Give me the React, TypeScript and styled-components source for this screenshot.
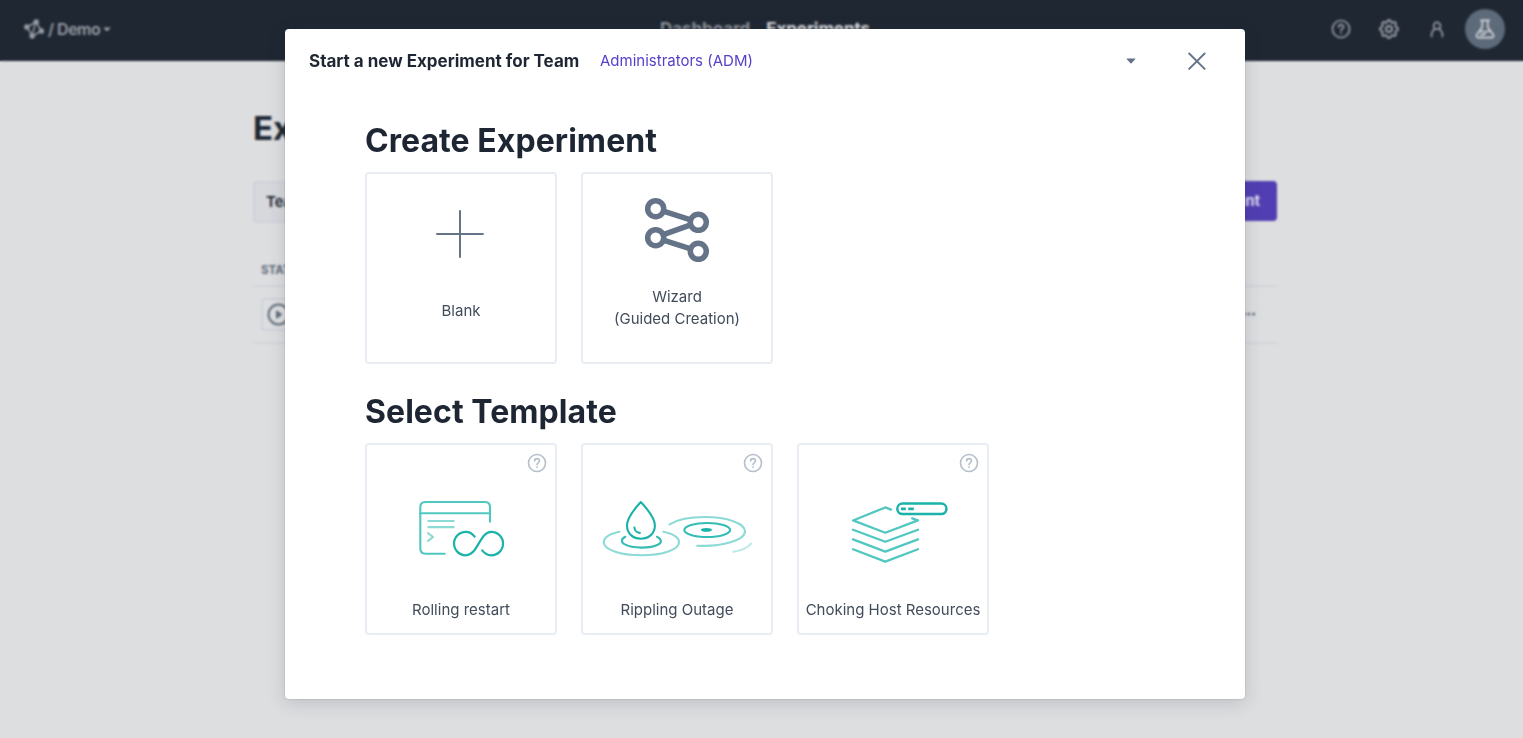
import React from "react";
import styled, { createGlobalStyle } from "styled-components";
import { HiOutlineCog } from "react-icons/hi";

const GlobalStyle = createGlobalStyle`
  * { box-sizing: border-box; }
  html, body { margin: 0; padding: 0; height: 100%; overflow: hidden; }
  body { background: #dddee0; font-family: Inter, "Liberation Sans", sans-serif; color: #1d2632; }
  button { font: inherit; border: 0; background: none; padding: 0; color: inherit; }
  svg { display: block; flex: none; }
`;

const Page = styled.div`
  height: 738px;
  overflow: hidden;
`;

const TopBar = styled.header`
  display: grid;
  grid-template-columns: 1fr auto 1fr;
  align-items: center;
  height: 61px;
  padding: 0 18px 3px 23px;
  background: #1f2733;
`;

const Brand = styled.div`
  display: flex;
  align-items: center;
  color: #999da4;
  font-size: 16px;
  font-weight: 600;
`;

const BrandName = styled.span`
  margin: 0 3px 0 4px;
  letter-spacing: -0.5px;
`;

const Nav = styled.nav`
  display: flex;
  gap: 16px;
  padding-left: 2px;
`;

const NavItem = styled.a<{ $active?: boolean }>`
  font-size: 17px;
  font-weight: 700;
  line-height: 20px;
  letter-spacing: -0.07px;
  color: ${(p) => (p.$active ? "#dddee0" : "#8e939b")};
`;

const Tools = styled.div`
  display: flex;
  justify-content: flex-end;
  align-items: center;
  color: #999da4;
`;

const Tool = styled.span`
  display: flex;
  justify-content: center;
  width: 48px;
`;

const Avatar = styled.span`
  display: flex;
  align-items: center;
  justify-content: center;
  width: 40px;
  height: 40px;
  margin-left: 4px;
  border-radius: 50%;
  background: #5d6a7a;
  color: #d5d8dc;
`;

const Main = styled.main`
  width: 1024px;
  margin-left: 253px;
  padding-top: 46px;
`;

const PageTitle = styled.h1`
  margin: 0;
  font-size: 33px;
  line-height: 42px;
  font-weight: 700;
`;

const ActionRow = styled.div`
  display: flex;
  justify-content: space-between;
  margin-top: 32px;
`;

const FilterButton = styled.button`
  height: 42px;
  width: 150px;
  padding: 0 11px 2px;
  border: 2px solid #ced2da;
  border-radius: 4px;
  background: #d6d8dc;
  font-size: 15px;
  font-weight: 600;
  text-align: left;
`;

const PrimaryButton = styled.button`
  height: 40px;
  padding: 0 17px 1px;
  border-radius: 4px;
  background: #513eb3;
  color: #dcd9ee;
  font-size: 15px;
  font-weight: 700;
`;

const TableHead = styled.div`
  height: 64px;
  padding: 38px 8px 0;
  border-bottom: 2px solid #d2d4da;
  color: #616d7c;
  font-size: 11.5px;
  font-weight: 700;
  line-height: 18px;
`;

const TableRow = styled.div`
  display: flex;
  align-items: center;
  justify-content: space-between;
  height: 57px;
  padding: 0 21px 1px 8px;
  border-bottom: 2px solid #d2d4da;
  color: #616d7c;
`;

const PlayBox = styled.span`
  display: flex;
  align-items: center;
  width: 60px;
  height: 33px;
  padding-left: 4px;
  border: 2px solid #ced2da;
  border-radius: 4px;
`;

const Overlay = styled.div`
  position: fixed;
  inset: 0;
  padding: 29px 0 0 285px;
  backdrop-filter: blur(1px);
`;

const Modal = styled.section`
  width: 960px;
  height: 670px;
  border-radius: 4px;
  background: #fff;
  box-shadow: 0 4px 18px rgba(29, 38, 50, 0.16), 0 0 2px rgba(29, 38, 50, 0.25);
`;

const ModalHeader = styled.header`
  display: flex;
  align-items: center;
  height: 64px;
  padding: 0 39px 0 24px;
`;

const ModalTitle = styled.h2`
  width: 291px;
  margin: 0;
  font-size: 17px;
  font-weight: 700;
  white-space: nowrap;
`;

const TeamSelect = styled.button`
  display: flex;
  align-items: center;
  justify-content: space-between;
  width: 536px;
  margin-right: auto;
  color: #5641c9;
  font-size: 15px;
  line-height: 22px;
`;

const ModalBody = styled.div`
  padding: 27px 80px 0;
`;

const Group = styled.section`
  margin-bottom: 27px;
`;

const GroupTitle = styled.h3`
  margin: 0 0 10px;
  font-size: 32px;
  letter-spacing: 0.06px;
  line-height: 42px;
  font-weight: 700;
`;

const Cards = styled.div`
  display: flex;
  gap: 24px;
`;

const Card = styled.button`
  position: relative;
  display: flex;
  flex-direction: column;
  align-items: center;
  width: 192px;
  height: 192px;
  border: 2px solid #e8edf3;
  border-radius: 4px;
  background: #fff;
`;

const CardArt = styled.span<{ $height: number; $drop?: number }>`
  display: flex;
  align-items: flex-start;
  justify-content: center;
  height: ${(p) => p.$height}px;
  padding-top: ${(p) => p.$drop}px;
`;

const CardLabel = styled.span`
  color: #414c5b;
  font-size: 15px;
  line-height: 22px;
  white-space: nowrap;
`;

const CardHelp = styled.span`
  position: absolute;
  top: 8px;
  right: 8px;
  color: #b5bfcc;
`;

const HelpIcon = ({ size = 20, weight = 1.6 }: { size?: number; weight?: number }) => (
  <svg width={size} height={size} viewBox="0 0 20 20" fill="none" stroke="currentColor" strokeWidth={weight} strokeLinecap="round">
    <circle cx="10" cy="10" r="8.5" />
    <path d="M7.6 8.1C7.6 4.7 12.5 4.9 12.5 7.8C12.5 9.8 10 9.8 10 11.7" />
    <circle cx="10" cy="14.2" r="0.5" fill="currentColor" strokeWidth="0.8" />
  </svg>
);

const Caret = ({ width = 10 }: { width?: number }) => (
  <svg width={width} height={width * 0.6} viewBox="0 0 10 6" fill="currentColor">
    <path d="M1.2.5h7.6c.5 0 .7.5.4.8L5.5 5.2c-.3.3-.7.3-1 0L.8 1.3C.5 1 .7.5 1.2.5Z" />
  </svg>
);

const Logo = () => (
  <svg width="21" height="20" viewBox="23 19 21 20" fill="currentColor" stroke="currentColor" strokeWidth="1.5">
    <path d="M27 27L36 22L41.5 31L32.5 36ZM35 24.5L32.8 33.5" fill="none" />
    <circle cx="26.8" cy="26.9" r="2" />
    <circle cx="36.2" cy="22" r="2" />
    <circle cx="41.4" cy="31" r="2" />
    <circle cx="32.2" cy="36" r="2" />
  </svg>
);

const PersonIcon = () => (
  <svg width="16" height="18" viewBox="0 0 16 18" fill="none" stroke="currentColor" strokeWidth="1.7" strokeLinecap="round">
    <circle cx="8" cy="5.7" r="3.4" />
    <path d="M2.5 16.5C2.5 12.5 4 9.8 6.1 8.7M13.5 16.5C13.5 12.5 12 9.8 9.9 8.7" />
  </svg>
);

const FlaskIcon = () => (
  <svg width="20" height="20" viewBox="0 0 20 20" fill="none" stroke="currentColor" strokeWidth="1.6" strokeLinecap="round" strokeLinejoin="round">
    <path d="M5.8 1.4H14.2M7.3 1.4V8L1.9 15.5C.9 17.2 1.5 18.6 3.2 18.6H16.8C18.5 18.6 19.1 17.2 18.1 15.5L12.7 8V1.4M4.8 12.3H9M11.3 12.3H15M5.6 15.6H8.5L10.5 13.7" />
  </svg>
);

const PlayIcon = () => (
  <svg width="23" height="23" viewBox="0 0 23 23" fill="none" stroke="currentColor" strokeWidth="2">
    <circle cx="11.5" cy="11.5" r="10" />
    <path d="M9.5 7.8L14.8 11.5L9.5 15.2Z" fill="currentColor" strokeWidth="1" />
  </svg>
);

const MoreIcon = () => (
  <svg width="14" height="4" viewBox="0 0 14 4" fill="currentColor">
    <circle cx="2" cy="2" r="1.5" />
    <circle cx="6.8" cy="2" r="1.5" />
    <circle cx="11.6" cy="2" r="1.5" />
  </svg>
);

const CloseIcon = () => (
  <svg width="18" height="18" viewBox="0 0 18 18" stroke="#647387" strokeWidth="1.9" strokeLinecap="round">
    <path d="M1.2 1.5L16.6 16.9M16.6 1.5L1.2 16.9" />
  </svg>
);

const PlusArt = () => (
  <svg width="50" height="50" viewBox="0 0 50 50" stroke="#647387" strokeWidth="2" strokeLinecap="round">
    <path d="M1 25H46.9M24 2V48" />
  </svg>
);

const WizardArt = () => (
  <svg width="66" height="66" viewBox="644 197 66 66" fill="none" stroke="#647387" strokeWidth="5.5">
    <path d="M663.3 211.1L690.7 219.8M690.7 224.8L663.3 234.7M663.3 240.1L690.7 248.8" />
    <circle cx="655.7" cy="208.7" r="8" />
    <circle cx="698.3" cy="222.3" r="8" />
    <circle cx="655.7" cy="237.7" r="8" />
    <circle cx="698.3" cy="251.3" r="8" />
  </svg>
);

const RestartArt = () => (
  <svg width="152" height="68" viewBox="385 498 152 68" fill="none" strokeWidth="2.1" strokeLinecap="round" strokeLinejoin="round">
    <g stroke="#50c7c0">
      <path d="M444.7 553.7H425.5Q420.3 553.7 420.3 548.5V507Q420.3 502 425.3 502H485Q490 502 490 507V521.8" />
      <path d="M420.3 513.2H490" />
    </g>
    <path d="M428.3 521H453.7M428.3 527.1H453.7M428 533.2L433 537L428 540.8" stroke="#8cdad5" />
    <path
      d="M474.6 536.7C472.2 533.4 469.2 531.8 465.8 531.8A11.75 11.75 0 0 0 465.8 555.3C478 555.3 479.5 531.8 491.3 531.8A11.75 11.75 0 0 1 491.3 555.3C487.5 555.3 484.5 553.4 482.2 550.4"
      stroke="#1ab2a9"
      strokeWidth="2.2"
    />
  </svg>
);

const RippleArt = () => (
  <svg width="152" height="68" viewBox="601 498 152 68" fill="none" strokeWidth="2.1" strokeLinecap="round" strokeLinejoin="round">
    <g stroke="#8cdad5">
      <path d="M619.5 531.8C610 533.9 603.8 537.8 603.8 542.3C603.8 549.5 620 555.3 641.5 555.3C663 555.3 679 549.5 679 542.3C679 537.8 673 533.9 663.3 531.8" />
      <path d="M669.5 524.3C677 519.8 690 517 705 517C727 517 745 523.3 745 531.2C745 540 722.5 547 697.2 545.7" />
      <path d="M733.2 551.7C741.5 550.5 748.2 547.6 751 543.7" stroke="#beeae7" />
    </g>
    <g stroke="#35bdb5">
      <path d="M625.3 536.8C620.9 539 621 542.3 624.3 544.2C632.8 548.8 650.2 548.8 658.8 544.2C662 542.3 661.6 539 657 536.8" />
      <ellipse cx="707.2" cy="530" rx="22.9" ry="7" />
    </g>
    <path
      d="M640.8 502C645.5 507 654.9 517.8 654.9 525.5C654.9 533.6 648.7 538.7 640.9 538.7C633 538.7 627 533.6 627 525.5C627 517.8 636.2 507 640.8 502ZM634.4 527.5C634.7 530.6 637 532.8 639.8 532.9"
      stroke="#1ab2a9"
    />
    <ellipse cx="706.4" cy="529.8" rx="5.6" ry="1.9" fill="#1ab2a9" />
  </svg>
);

const HostArt = () => (
  <svg width="152" height="68" viewBox="817 498 152 68" fill="none" strokeWidth="2.2" strokeLinecap="round" strokeLinejoin="round">
    <path
      d="M891 509.6L885.3 507.4L853 520.4L885.3 532.7L918 520.4L912.2 518.4M853 529.7L885.3 541.7L918 529.7M853 539.4L885.3 551.6L918 539.4M853 549.2L885.3 561.6L918 549.2"
      stroke="#50c7c0"
    />
    <rect x="897.3" y="503.5" width="49.2" height="10.6" rx="5.3" stroke="#1ab2a9" strokeWidth="2.5" />
    <path d="M901 508.8H905.8M908.3 508.8H913.8" stroke="#1ab2a9" strokeWidth="2.8" strokeLinecap="butt" />
  </svg>
);

const templates = [
  { label: "Rolling restart", Art: RestartArt },
  { label: "Rippling Outage", Art: RippleArt },
  { label: "Choking Host Resources", Art: HostArt },
];

export default function App() {
  return (
    <>
      <GlobalStyle />
      <Page>
        <TopBar>
          <Brand>
            <Logo />
            <BrandName>/ Demo</BrandName>
            <Caret width={8} />
          </Brand>
          <Nav>
            <NavItem>Dashboard</NavItem>
            <NavItem $active>Experiments</NavItem>
          </Nav>
          <Tools>
            <Tool><HelpIcon weight={1.7} /></Tool>
            <Tool><HiOutlineCog size={24} /></Tool>
            <Tool><PersonIcon /></Tool>
            <Avatar><FlaskIcon /></Avatar>
          </Tools>
        </TopBar>
        <Main>
          <PageTitle>Experiments</PageTitle>
          <ActionRow>
            <FilterButton>Team</FilterButton>
            <PrimaryButton>New Experiment</PrimaryButton>
          </ActionRow>
          <TableHead>STATE</TableHead>
          <TableRow>
            <PlayBox><PlayIcon /></PlayBox>
            <MoreIcon />
          </TableRow>
        </Main>
      </Page>
      <Overlay>
        <Modal>
          <ModalHeader>
            <ModalTitle>Start a new Experiment for Team</ModalTitle>
            <TeamSelect>
              Administrators (ADM)
              <svg width="10" height="6" viewBox="0 0 10 6" fill="#647387">
                <path d="M1.2.5h7.6c.5 0 .7.5.4.8L5.5 5.2c-.3.3-.7.3-1 0L.8 1.3C.5 1 .7.5 1.2.5Z" />
              </svg>
            </TeamSelect>
            <CloseIcon />
          </ModalHeader>
          <ModalBody>
            <Group>
              <GroupTitle>Create Experiment</GroupTitle>
              <Cards>
                <Card>
                  <CardArt $height={126} $drop={35}><PlusArt /></CardArt>
                  <CardLabel>Blank</CardLabel>
                </Card>
                <Card>
                  <CardArt $height={112} $drop={23}><WizardArt /></CardArt>
                  <CardLabel>Wizard<br />(Guided Creation)</CardLabel>
                </Card>
              </Cards>
            </Group>
            <Group>
              <GroupTitle>Select Template</GroupTitle>
              <Cards>
                {templates.map(({ label, Art }) => (
                  <Card key={label}>
                    <CardHelp><HelpIcon /></CardHelp>
                    <CardArt $height={154} $drop={53}><Art /></CardArt>
                    <CardLabel>{label}</CardLabel>
                  </Card>
                ))}
              </Cards>
            </Group>
          </ModalBody>
        </Modal>
      </Overlay>
    </>
  );
}
